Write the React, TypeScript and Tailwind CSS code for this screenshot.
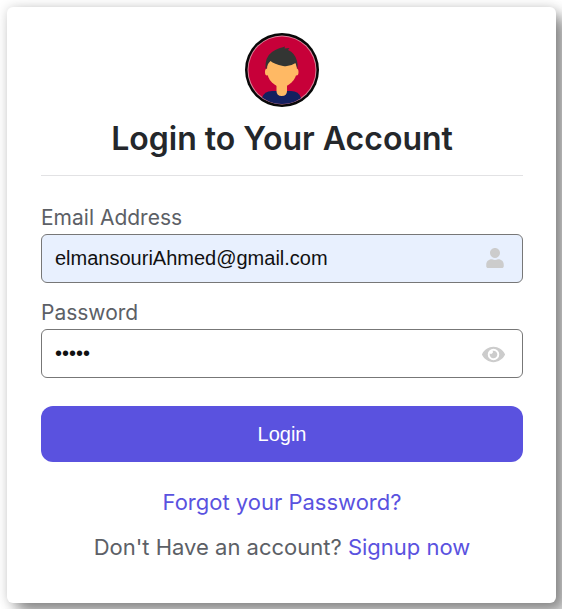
import { FaEye, FaUser } from "react-icons/fa";

const Avatar = () => (
  <svg viewBox="0 0 74 74" className="size-[74px]" role="img" aria-label="User avatar">
    <defs>
      <clipPath id="avatar-disc">
        <circle cx="37" cy="37" r="34" />
      </clipPath>
    </defs>
    <circle cx="37" cy="37" r="37" fill="#080808" />
    <circle cx="37" cy="37" r="34.5" fill="#d9849b" />
    <circle cx="37" cy="37" r="33.5" fill="#c70039" />
    <g clipPath="url(#avatar-disc)">
      <path d="M17 74V65Q19 58 27 58H46Q54 58 56 65V74Z" fill="#14205f" />
      <path d="M31.500 50H42V58Q42 63 36.750 63Q31.500 63 31.500 58Z" fill="#ffb964" />
      <ellipse cx="22" cy="39" rx="2" ry="3.500" fill="#ffb964" />
      <ellipse cx="51.500" cy="39" rx="2" ry="3.500" fill="#ffb964" />
      <path d="M22 36Q22 28 27 26H47Q52 29 52 37Q51.500 45 46.500 49.500Q41.500 54 36.750 54Q32 54 27 49.500Q22 45 22 36Z" fill="#ffb964" />
      <path d="M20.500 35Q20 24 27 19Q33 15 37 14.500L40 13.500L39.500 15.500L44.500 15L43 17Q50 20 52 28Q53 32 52.500 36L50.500 30Q45 34 38 33Q29 31 25.500 28Q22 31 21.500 36Z" fill="#333533" />
    </g>
  </svg>
);

const field =
  "h-[49px] w-full rounded-md border border-[#777] pr-14 pl-[13px] font-['Liberation_Sans',Arial,sans-serif] text-xl text-[#111] outline-none";

export default function App() {
  return (
    <main className="bg-white p-[7px] pr-1.5 pb-1.5 font-[Inter,sans-serif] text-[#5c6066]">
      <section className="rounded-md bg-white pt-[26px] pr-[33px] pb-[33px] pl-[34px] shadow-[0_0_12px_rgba(0,0,0,0.16),10px_10px_15px_rgba(0,0,0,0.42)]">
        <header className="flex flex-col items-center border-b border-[#e2e2e4] pb-4">
          <Avatar />
          <h1 className="mt-3 text-[32px] leading-10 font-semibold whitespace-nowrap text-[#24272b]">
            Login to Your Account
          </h1>
        </header>
        <form className="mt-[26px]" onSubmit={(e) => e.preventDefault()}>
          <label htmlFor="email" className="block text-[21px] leading-8">
            Email Address
          </label>
          <div className="relative">
            <input id="email" type="email" defaultValue="elmansouriAhmed@gmail.com" className={`${field} bg-[#e8f0fe]`} />
            <FaUser className="absolute top-3.5 right-[18px] size-5 text-[#ccc]" />
          </div>
          <label htmlFor="password" className="mt-3.5 block text-[21px] leading-8">
            Password
          </label>
          <div className="relative">
            <input id="password" type="password" defaultValue="12345" className={`${field} bg-white`} />
            <button type="button" aria-label="Show password" className="absolute top-3.5 right-[18px] text-[#ccc]">
              <FaEye className="size-[23px]" />
            </button>
          </div>
          <button
            type="submit"
            className="mt-7 h-14 w-full rounded-xl bg-[#5a52df] font-['Liberation_Sans',Arial,sans-serif] text-xl text-white"
          >
            Login
          </button>
        </form>
        <div className="mt-[18px] text-center text-[22px] leading-[45px] whitespace-nowrap">
          <a href="#forgot" className="block text-[#5a52df]">Forgot your Password?</a>
          <p>
            Don't Have an account? <a href="#signup" className="text-[#5a52df]">Signup now</a>
          </p>
        </div>
      </section>
    </main>
  );
}
